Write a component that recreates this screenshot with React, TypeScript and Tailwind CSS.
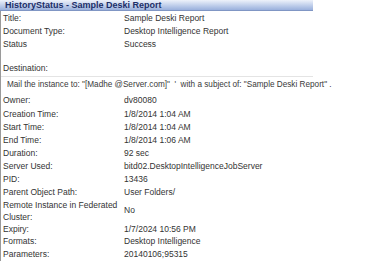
import React from 'react';

interface Row {
  label: string;
  value: string;
  h?: string;
}

const topRows: Row[] = [
  { label: 'Title:', value: 'Sample Deski Report' },
  { label: 'Document Type:', value: 'Desktop Intelligence Report' },
  { label: 'Status', value: 'Success' },
];

const bottomRows: Row[] = [
  { label: 'Owner:', value: 'dv80080' },
  { label: 'Creation Time:', value: '1/8/2014 1:04 AM', h: 'h-[14px]' },
  { label: 'Start Time:', value: '1/8/2014 1:04 AM' },
  { label: 'End Time:', value: '1/8/2014 1:06 AM' },
  { label: 'Duration:', value: '92 sec' },
  { label: 'Server Used:', value: 'bitd02.DesktopIntelligenceJobServer' },
  { label: 'PID:', value: '13436' },
  { label: 'Parent Object Path:', value: 'User Folders/', h: 'h-[12px]' },
];

const lastRows: Row[] = [
  { label: 'Expiry:', value: '1/7/2024 10:56 PM', h: 'h-[12px]' },
  { label: 'Formats:', value: 'Desktop Intelligence' },
  { label: 'Parameters:', value: '20140106;95315' },
];

const InfoRow = ({ label, value, h }: Row) => (
  <div className={`flex items-center ${h ?? 'h-[13px]'}`}>
    <div className="w-[123px] shrink-0 pl-[2px]">{label}</div>
    <div className="whitespace-nowrap">{value}</div>
  </div>
);

export default function App() {
  return (
    <div
      className="w-[381px] h-[264px] bg-white text-[8.5px] text-[#333] overflow-hidden"
      style={{ fontFamily: '"Liberation Sans", Arial, sans-serif' }}
    >
      <div className="w-[313px]">
        {/* title bar */}
        <div className="h-[11px] flex items-center pl-[5px] bg-gradient-to-b from-[#eef2fa] via-[#c3d1ec] to-[#9ab0dc] border-b border-[#8096c4] font-bold text-[9px] text-[#1c2e68] leading-none">
          HistoryStatus - Sample Deski Report
        </div>

        <div className="border-l border-[#9a9a9a] leading-none">
          <div className="pt-[1px]">
            {topRows.map((r) => (
              <InfoRow key={r.label} {...r} />
            ))}
          </div>

          <div className="h-[10px]" />
          <div className="h-[15px] flex items-center pl-[2px]">Destination:</div>

          {/* mail destination */}
          <div className="h-[18px] flex items-center pl-[6px] border-t border-[#e4e4e4] whitespace-pre text-[8.2px] text-[#3a3a3a]">
            {'Mail the instance to: "[Madhe @Server'}
            <span className="align-[2px]">.com</span>
            {']"  \'  with a subject of: "Sample Deski Report" .'}
          </div>

          {bottomRows.map((r) => (
            <InfoRow key={r.label} {...r} />
          ))}

          <div className="flex items-center h-[25px]">
            <div className="w-[123px] shrink-0 pl-[2px] leading-[12px]">
              Remote Instance in Federated
              <br />
              Cluster:
            </div>
            <div>No</div>
          </div>

          {lastRows.map((r) => (
            <InfoRow key={r.label} {...r} />
          ))}
        </div>
      </div>
    </div>
  );
}
